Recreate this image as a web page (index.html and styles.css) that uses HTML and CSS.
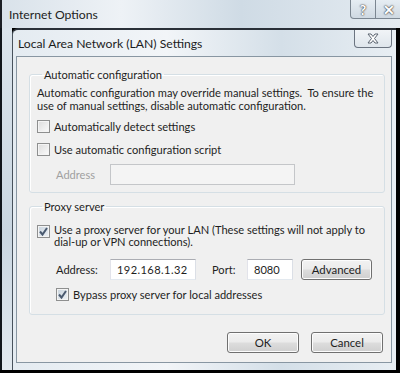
FILE: index.html
```html
<!DOCTYPE html>
<html lang="en">
<head>
  <meta charset="UTF-8">
  <title>Local Area Network (LAN) Settings</title>
  <link rel="stylesheet" href="styles.css">
</head>
<body>
  <div class="screen">
    <!-- parent window caption -->
    <div class="outer-title">
      <span class="outer-name">Internet Options</span>
      <div class="caption-btns">
        <span class="cap-btn help">?</span>
        <span class="cap-btn close">&#x2715;</span>
      </div>
    </div>

    <div class="workarea">
      <div class="outer-frame"></div>

      <div class="dialog">
        <div class="dialog-title">
          <span>Local Area Network (LAN) Settings</span>
          <span class="dlg-close">
            <svg width="16" height="11" viewBox="0 0 16 11">
              <path d="M3 1h3l2 2.5L10 1h3l-3.5 4.5L13 10h-3L8 7.5 6 10H3l3.5-4.5z" fill="#fff" stroke="#5b6470" stroke-width="1"/>
            </svg>
          </span>
        </div>

        <div class="dialog-body">
          <fieldset class="group auto-group">
            <legend>Automatic configuration</legend>
            <p class="desc">Automatic configuration may override manual settings.&nbsp; To ensure the<br>use of manual settings, disable automatic configuration.</p>
            <label class="check"><span class="box"></span>Automatically detect settings</label>
            <label class="check"><span class="box"></span>Use automatic configuration script</label>
            <div class="field-row indent">
              <span class="lbl disabled">Address</span>
              <span class="input wide disabled"></span>
            </div>
          </fieldset>

          <fieldset class="group proxy-group">
            <legend>Proxy server</legend>
            <label class="check multi">
              <span class="box checked"><svg width="11" height="11" viewBox="0 0 11 11"><path d="M2 5.5l2.5 3L9 2" fill="none" stroke="#4a5a70" stroke-width="2"/></svg></span>
              <span>Use a proxy server for your LAN (These settings will not apply to<br>dial-up or VPN connections).</span>
            </label>
            <div class="field-row indent proxy-row">
              <span class="lbl">Address:</span>
              <span class="input addr">192.168.1.32</span>
              <span class="lbl port-lbl">Port:</span>
              <span class="input port">8080</span>
              <button class="btn adv">Advanced</button>
            </div>
            <label class="check indent">
              <span class="box checked"><svg width="11" height="11" viewBox="0 0 11 11"><path d="M2 5.5l2.5 3L9 2" fill="none" stroke="#4a5a70" stroke-width="2"/></svg></span>
              Bypass proxy server for local addresses
            </label>
          </fieldset>

          <div class="actions">
            <button class="btn">OK</button>
            <button class="btn">Cancel</button>
          </div>
        </div>
      </div>
    </div>
  </div>
</body>
</html>
```

FILE: styles.css
```css
* { margin: 0; padding: 0; box-sizing: border-box; }
body { background: #000; font-family: Lato, "Open Sans", sans-serif; font-size: 11.1px; color: #1e1e1e; }

.screen {
  width: 400px;
  height: 373px;
  display: flex;
  flex-direction: column;
  background: #000;
  overflow: hidden;
}

/* Aero glass look for window frames */
.outer-title {
  height: 28px;
  display: flex;
  justify-content: space-between;
  background: linear-gradient(90deg, #d9e2ea 0%, #eef2f6 30%, #cfdbe5 60%, #e4ebf1 100%);
  border-left: 2px solid #1b1f25;
}
.outer-name {
  padding: 7px 0 0 7px;
  font-size: 12.2px;
  color: #222;
}
.caption-btns { display: flex; align-items: flex-start; }
.cap-btn {
  height: 19px;
  display: flex;
  align-items: center;
  justify-content: center;
  border: 1px solid #7b8691;
  border-top: none;
  background: linear-gradient(#e6edf3, #cfd9e2);
  color: #fff;
  font-weight: bold;
  font-size: 14px;
  text-shadow: 0 0 2px #333, 0 0 1px #333;
}
.cap-btn.help { width: 26px; border-radius: 0 0 0 4px; }
.cap-btn.close { width: 26px; margin-right: -2px; border-left: none; }

.workarea {
  flex: 1;
  display: flex;
  padding-right: 4px;
  margin-bottom: 3px;
  background: #000;
}
.outer-frame {
  width: 12px;
  flex: none;
  border-left: 2px solid #10151b;
  background: linear-gradient(#dbe4ec, #c9d6e1 60%, #e2e9ef);
}

.dialog {
  flex: 1;
  min-width: 0;
  display: flex;
  flex-direction: column;
  padding: 0 4px 7px 3px;
  border-top: 2px solid #2a3038;
  border-left: 1px solid #48525c;
  border-radius: 6px 0 0 0;
  background: linear-gradient(90deg, #e4ebf1 0%, #f2f5f8 40%, #d4dfe8 70%, #e8eef3 100%);
}
.dialog-title {
  height: 26px;
  display: flex;
  justify-content: space-between;
  align-items: flex-start;
  font-size: 12.2px;
  color: #1c1c1c;
}
.dialog-title > span:first-child { padding: 6px 0 0 2px; }
.dlg-close {
  width: 38px;
  height: 18px;
  display: flex;
  align-items: center;
  justify-content: center;
  border: 1px solid #6b7480;
  border-top: none;
  border-radius: 0 0 4px 4px;
  background: linear-gradient(#f1f4f7, #dfe6ec);
}

.dialog-body {
  flex: 1;
  min-width: 0;
  display: flex;
  flex-direction: column;
  background: #f0f0f0;
  border: 1px solid #8896a2;
  padding: 11px 6px 0 12px;
}

.group {
  min-width: 0;
  border: 1px solid #d5dfe5;
  border-radius: 3px;
  box-shadow: inset 1px 1px 0 #fff;
  padding: 0 6px 6px 7px;
}
.group legend {
  padding: 0 2px;
  margin-left: 5px;
  color: #1e1e1e;
}
.auto-group { height: 125px; }
.proxy-group { height: 115px; margin-top: 7px; padding-top: 11px; }

.desc { line-height: 13px; margin-top: 5px; white-space: nowrap; }

.check {
  display: flex;
  align-items: center;
  gap: 4px;
  height: 13px;
  margin-top: 8px;
}
.auto-group .check + .check { margin-top: 10px; }
.check.multi { align-items: flex-start; height: auto; line-height: 12px; margin-top: 0; white-space: nowrap; }
.box {
  width: 13px;
  height: 13px;
  flex: none;
  border: 1px solid #8e8f8f;
  background: linear-gradient(135deg, #dcdcdc, #fbfbfb);
  box-shadow: inset 0 0 0 1px #f4f4f4;
  display: flex;
  align-items: center;
  justify-content: center;
}
.box.checked { background: linear-gradient(135deg, #c9d4de, #eef2f6); }
.check.multi .box { margin-top: 1px; }

.indent { margin-left: 19px; }

.field-row {
  display: flex;
  align-items: center;
  height: 21px;
}
.auto-group .field-row { margin-top: 8px; }
.lbl { width: 54px; flex: none; }
.lbl.disabled { color: #a0a0a0; }
.input {
  height: 21px;
  flex: none;
  background: #fff;
  border: 1px solid #abadb3;
  border-color: #abadb3 #dbdfe6 #e3e9ef #e2e3ea;
  padding: 3px 0 0 6px;
}
.input.disabled { background: #f4f4f4; border-color: #c4c6c9; }
.input.wide { width: 185px; }
.input.addr { width: 86px; letter-spacing: 0.4px; }
.lbl.port-lbl { width: 35px; margin-left: 16px; }
.input.port { width: 46px; }

.proxy-row { margin-top: 11px; }
.proxy-group .check.indent { margin-top: 8px; }

.btn {
  height: 21px;
  width: 72px;
  flex: none;
  border: 1px solid #707070;
  border-radius: 3px;
  background: linear-gradient(#f2f2f2 0%, #ebebeb 48%, #dddddd 52%, #cfcfcf 100%);
  box-shadow: inset 0 0 0 1px #fcfcfc;
  font-family: inherit;
  font-size: 11.4px;
  color: #1e1e1e;
}
.btn.adv { margin-left: 8px; width: 71px; }

.actions {
  display: flex;
  justify-content: flex-end;
  gap: 12px;
  padding: 17px 2px 0 0;
}
```
